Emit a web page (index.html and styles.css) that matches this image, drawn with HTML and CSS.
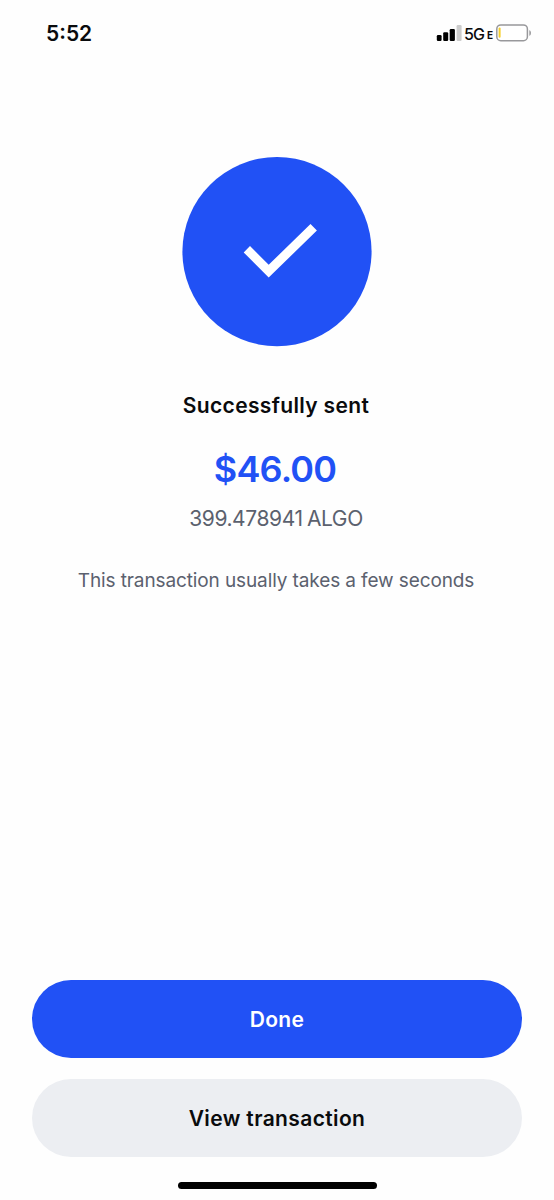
FILE: index.html
```html
<!DOCTYPE html>
<html lang="en">
<head>
<meta charset="utf-8">
<meta name="viewport" content="width=device-width, initial-scale=1">
<title>Successfully sent</title>
<link rel="stylesheet" href="styles.css">
</head>
<body>
<div class="screen">
  <header class="status">
    <span class="time">5:52</span>
    <div class="indicators">
      <svg class="signal" width="26" height="16" viewBox="0 0 26 16" aria-hidden="true">
        <rect x="0.8" y="10" width="4.8" height="6" rx="1.2"/>
        <rect x="7.2" y="7.2" width="5" height="8.8" rx="1.2"/>
        <rect x="13.7" y="4" width="5.2" height="12" rx="1.2"/>
        <rect class="faded" x="20.6" y="0" width="5" height="16" rx="1.2"/>
      </svg>
      <span class="network">5G</span><span class="network-e">E</span>
      <svg class="battery" width="36" height="18" viewBox="0 0 36 18" aria-hidden="true">
        <rect class="case" x="0.8" y="0.9" width="30.6" height="15.8" rx="4"/>
        <rect class="charge" x="2.6" y="3.6" width="2" height="10.2" rx="1"/>
        <path class="cap" d="M33.3 6.2C35.5 6.7 35.5 11.2 33.3 11.7Z"/>
      </svg>
    </div>
  </header>
  <main class="result">
    <svg class="success" width="190" height="190" viewBox="0 0 190 190" role="img" aria-label="Success">
      <circle cx="95" cy="94.6" r="94.6"/>
      <path d="M61.7 95.4L68 89.1L86.7 107.8L128.5 67L134.9 73.4L86.7 120.6Z"/>
    </svg>
    <h1 class="title">Successfully sent</h1>
    <p class="amount">$46.00</p>
    <p class="crypto">399.478941 ALGO</p>
    <p class="note">This transaction usually takes a few seconds</p>
  </main>
  <footer class="actions">
    <button class="button primary"><span>Done</span></button>
    <button class="button secondary"><span>View transaction</span></button>
    <div class="home-bar"></div>
  </footer>
</div>
</body>
</html>
```
FILE: styles.css
```css
* { box-sizing: border-box; }
body {
  margin: 0;
  background: #fefefe;
  color: #0a0b0d;
  font-family: Inter, "Liberation Sans", sans-serif;
}
.screen {
  display: flex;
  flex-direction: column;
  height: 1200px;
}
.status {
  display: flex;
  justify-content: space-between;
  height: 157px;
  padding: 20px 22px 0 46px;
}
.time {
  font-size: 21px;
  line-height: 28px;
  font-weight: 600;
}
.indicators {
  display: flex;
  align-items: flex-start;
}
.signal { margin: 5px 2px 0 0; }
.faded { fill: #cccccc; }
.network {
  font-size: 16px;
  line-height: 28px;
  font-weight: 500;
  letter-spacing: -1px;
}
.network-e {
  margin: 1px 3px 0 3px;
  font-size: 10px;
  line-height: 28px;
  font-weight: 700;
}
.battery { margin-top: 4px; }
.case { fill: #fff; stroke: #98989b; stroke-width: 1.5; }
.charge { fill: #f6cf28; }
.cap { fill: #98989b; }
.result {
  display: flex;
  flex: 1;
  flex-direction: column;
  align-items: center;
  text-align: center;
}
.success circle { fill: #2151f5; }
.success path { fill: #fff; }
.title, .amount, .crypto, .note {
  margin: 0;
  padding-right: 2px;
  white-space: nowrap;
}
.title {
  margin-top: 43px;
  font-size: 21px;
  line-height: 32px;
  font-weight: 600;
  letter-spacing: 0.34px;
}
.amount {
  margin-top: 23px;
  padding-right: 4px;
  color: #2151f5;
  font-size: 36px;
  line-height: 48px;
  font-weight: 600;
  letter-spacing: -0.8px;
}
.crypto {
  margin-top: 10px;
  color: #5b616e;
  font-size: 21px;
  line-height: 32px;
  letter-spacing: -0.4px;
  word-spacing: -1.2px;
}
.note {
  margin-top: 30px;
  color: #5b616e;
  font-size: 19px;
  line-height: 32px;
  letter-spacing: -0.11px;
}
.actions {
  display: flex;
  flex-direction: column;
  align-items: center;
  padding: 0 32px 11px;
}
.button {
  width: 100%;
  height: 78px;
  margin-bottom: 21px;
  padding: 2px 0 0;
  border: 0;
  border-radius: 39px;
  font: 600 21px/32px Inter, "Liberation Sans", sans-serif;
  letter-spacing: 0.37px;
}
.primary { background: #2151f5; color: #fff; }
.secondary { margin-bottom: 25px; background: #eceef2; color: #0a0b0d; }
.home-bar {
  width: 199px;
  height: 7px;
  border-radius: 4px;
  background: #000;
}
```
